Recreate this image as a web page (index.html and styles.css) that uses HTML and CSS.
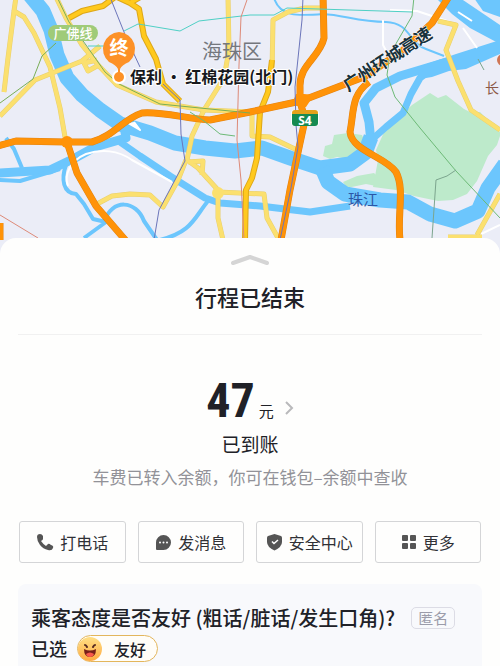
FILE: index.html
```html
<!DOCTYPE html>
<html lang="zh-CN">

<head>
    <meta charset="utf-8">
    <meta name="viewport" content="width=device-width, initial-scale=1.0">
    <title>行程已结束</title>
    <link rel="stylesheet" href="styles.css">
</head>

<body>
    <svg class="map" viewBox="0 0 500 260" preserveAspectRatio="xMidYMin slice" role="img" aria-label="地图">
        <!-- parks -->
        <g class="park">
            <path d="M385 130L412 105L424 97L430 93L438 98L446 95L464 109L470 112H480L501 133L497 145L488 156L477 181L467 194L453 200L438 201L414 196L396 190L373 187L378 160L376 150Z" />
            <path d="M323 156L325 146L332 144L334 135L348 133L362 135L366 145L357 155L349 159L337 157L330 159Z" />
            <path d="M343 182L357 176L374 173L378 177L376 186L366 184L347 188Z" />
        </g>

        <!-- rivers -->
        <g class="river">
            <path class="wide" d="M29 -6L43 11L51 30L57 55L67 78L82 95L100 110L120 124L150 133L175 143L205 148L235 151L262 148L290 158L320 168L350 164L365 153L371 137" />
            <path class="wide" d="M322 168L328 182L345 194L380 200L408 202L430 214L455 221L478 211L488 188L505 164" />
            <path class="medium" d="M-2 173L50 170L75 158L95 147L126 138L124 126" />
            <path class="middle" d="M120 142L140 156L170 176L205 198L220 203L260 206L310 212L350 206" />
            <path class="small" d="M6 138L14 149L22 168M-2 180L20 181L60 169" />
            <path class="small" d="M66 165C61 179 63 193 76 194L84 204L93 219L106 222L84 238" />
            <path class="small" d="M104 222C112 198 136 200 144 221L157 240" />
            <path class="small" d="M160 240C192 232 194 218 208 201" />
            <path class="medium" d="M505 47L474 56L440 64L400 76L376 88L364 103L369 122L371 142" />
            <path class="middle" d="M434 67L420 78L411 94L403 113L386 127L368 143" />
            <path class="fill" d="M436 -2H460L500 25V44L470 28L452 14Z" />
            <path class="fill" d="M474 -2H500V17L483 11Z" />
            <path class="fill" d="M424 65L456 54L500 40V54L466 69L449 71L432 77L420 79Z" />
            <path class="thin" d="M274 -2C280 17 297 16 323 14C344 15 358 22 386 22C411 23 408 43 426 49L444 56" />
        </g>
        <g class="gap">
            <path class="land" d="M128 123L140 130L134 122" />
            <path d="M68 186C63 174 72 160 86 154C101 149 118 150 132 160L172 182" />
            <path d="M383 20V45L390 58M390 10L417 11L450 22M458 12L472 21M463 28L477 48M479 235L500 225" />
        </g>

        <!-- light yellow streets -->
        <g class="street-edge">
            <path d="M16 -3L14 11L24 17L34 33L50 67L60 108L65 137M14 11L8 58L4 92M0 116L35 80L82 61L100 46M82 61L92 53M97 60L84 63L88 71L97 66" />
            <path d="M56 -3L66 18L82 45L99 66L117 85L156 102L204 110L252 112" />
            <path d="M228 -3L229 50L224 78L204 110L192 136L187 160L198 168L218 190V218L223 240M188 162L203 161L202 175M218 192L264 194L267 218L278 238" />
            <path d="M325 8H305L288 12L273 20L272 72M252 113L252 136L270 137L297 150M95 205L112 196L130 194L150 195L163 207L178 180L186 160" />
            <path d="M438 21L456 25L446 50L458 81L471 110L500 130M500 194L477 235M448 237H482" />
        </g>
        <g class="street">
            <path d="M16 -3L14 11L24 17L34 33L50 67L60 108L65 137M14 11L8 58L4 92M0 116L35 80L82 61L100 46M82 61L92 53M97 60L84 63L88 71L97 66" />
            <path d="M56 -3L66 18L82 45L99 66L117 85L156 102L204 110L252 112" />
            <path d="M228 -3L229 50L224 78L204 110L192 136L187 160L198 168L218 190V218L223 240M188 162L203 161L202 175M218 192L264 194L267 218L278 238" />
            <path d="M325 8H305L288 12L273 20L272 72M252 113L252 136L270 137L297 150M95 205L112 196L130 194L150 195L163 207L178 180L186 160" />
            <path d="M438 21L456 25L446 50L458 81L471 110L500 130M500 194L477 235M448 237H482" />
            <circle cx="218" cy="193" r="4" />
        </g>
        <g class="main-edge">
            <path d="M69 18L82 11L103 6L115 -3M117 -3L130 3L139 9L144 36L156 59L163 84L180 101M130 3L142 -4" />
            <path d="M272 60L268 92L260 112L257 158L252 178L246 190L245 240" />
        </g>
        <g class="main">
            <path d="M69 18L82 11L103 6L115 -3M117 -3L130 3L139 9L144 36L156 59L163 84L180 101M130 3L142 -4" />
            <path d="M272 60L268 92L260 112L257 158L252 178L246 190L245 240" />
        </g>

        <!-- expressways -->
        <g class="express-edge">
            <path d="M-2 146L16 141L65 142H92C114 136 123 119 142 113C161 111 188 119 210 120L250 112L301 101L364 77L402 51L432 23L450 -5" />
            <path d="M67 142L77 173L96 206L127 242M323 -5L324 38C320 57 299 65 300 87V101L305 120L300 143L290 190L281 240" />
            <path d="M369 82C351 95 354 112 350 132C352 151 386 157 396 172C405 189 397 215 400 240M0 223V240" />
        </g>
        <g class="express">
            <path d="M-2 146L16 141L65 142H92C114 136 123 119 142 113C161 111 188 119 210 120L250 112L301 101L364 77L402 51L432 23L450 -5" />
            <path d="M67 142L77 173L96 206L127 242M323 -5L324 38C320 57 299 65 300 87V101L305 120L300 143L290 190L281 240" />
            <path d="M369 82C351 95 354 112 350 132C352 151 386 157 396 172C405 189 397 215 400 240M0 223V240" />
        </g>
        <g class="junction">
            <circle cx="67" cy="142" r="6" />
            <path d="M296 94H304L315 95L310 101L306 107H300L292 104Z" />
        </g>

        <!-- metro lines -->
        <g class="metro">
            <path class="green" d="M0 103L33 79L42 56L56 43M57 -3L69 22L86 45L105 72L119 84L160 104L250 113" />
            <path class="teal" d="M88 46L104 46M124 31L138 24L180 31L199 21L250 15H274L287 8L413 12" />
            <path class="lime" d="M414 -3L412 16L390 54L387 75L395 97L420 128L456 171L500 218M190 112L204 121L220 134L235 136" />
            <path class="violet" d="M110 -3L126 37L140 67M163 84L180 100L181 134L185 161L159 210L154 240M303 -3L302 20L295 87L296 125L298 147L291 188L280 240" />
            <path class="coral" d="M248 -3L241 17L239 65L237 140L241 180L244 240M0 215L38 238" />
            <path class="grey" d="M432 238L436 180L447 176L456 170M478 59L484 70" />
        </g>

        <!-- labels -->
        <rect x="48" y="25" width="50" height="16" rx="8" fill="#9fcb79" />
        <text class="line-name" x="73" y="38">广佛线</text>
        <text class="district" x="202" y="59">海珠区</text>
        <text class="river-name" x="348" y="205">珠江</text>
        <text class="road-name" transform="translate(348 92) rotate(-33)">广州环城高速</text>
        <circle cx="503" cy="60" r="6" fill="#cf7655" />
        <text class="town" x="485" y="93">长</text>
        <rect x="291" y="110" width="28" height="16" rx="3" fill="#fff" />
        <path d="M292 115V113Q292 110 295 110H315Q318 110 318 113V115Z" fill="#e4a21b" />
        <path d="M292 114H318V123Q318 126 315 126H295Q292 126 292 123Z" fill="#158a51" />
        <text class="road-code" x="305" y="125">S4</text>

        <!-- destination pin -->
        <circle cx="119" cy="77" r="7" fill="#fff" />
        <circle cx="119" cy="77" r="5" fill="#fd9127" />
        <path d="M119 32A17 17 0 0 1 129 62Q122 65 120 69V77H118V69Q116 65 109 62A17 17 0 0 1 119 32Z" fill="#fd9127" />
        <text class="pin-text" x="119" y="55">终</text>
        <text class="place" x="130" y="83">保利 · 红棉花园(北门)</text>
    </svg>

    <main class="sheet">
        <button class="handle" type="button" aria-label="展开">
            <svg width="40" height="12" viewBox="0 0 40 12">
                <path d="M3 9L20 3L37 9" fill="none" stroke="#d5d5d5" stroke-width="4" stroke-linecap="round" stroke-linejoin="round" />
            </svg>
        </button>
        <h1 class="title">行程已结束</h1>

        <section class="fare">
            <a class="amount" href="#">
                <span class="number">47</span>
                <span class="unit">元</span>
                <svg class="arrow" width="10" height="16" viewBox="0 0 10 16">
                    <path d="M2 2L8 8L2 14" fill="none" stroke="#b9b9bb" stroke-width="2" />
                </svg>
            </a>
            <p class="status">已到账</p>
            <p class="note">车费已转入余额，你可在钱包–余额中查收</p>
        </section>

        <div class="actions">
            <button class="action" type="button">
                <svg width="18" height="18" viewBox="0 0 18 18">
                    <path d="M1 4Q1 1 4 1Q6 1 7 3L7 6Q7 7 5 8Q7 11 10 13L12 11Q13 10 15 12Q18 13 17 15Q16 18 12 17Q7 16 4 12Q1 8 1 4Z" fill="#555" />
                </svg>
                打电话
            </button>
            <button class="action" type="button">
                <svg width="17" height="17" viewBox="0 0 17 17">
                    <path d="M8.500 1A7.500 7.500 0 1 1 8.500 16H2Q1 16 1 15V8.500A7.500 7.500 0 0 1 8.500 1Z" fill="#555" />
                    <g fill="#fff">
                        <circle cx="5" cy="8.500" r="1" />
                        <circle cx="8.500" cy="8.500" r="1" />
                        <circle cx="12" cy="8.500" r="1" />
                    </g>
                </svg>
                发消息
            </button>
            <button class="action" type="button">
                <svg width="17" height="18" viewBox="0 0 17 18">
                    <path d="M8.500 1L15 3Q16 3.500 16 4.500V9Q16 14 8.500 17.500Q1 14 1 9V4.500Q1 3.500 2 3Z" fill="#555" />
                    <path d="M6 8.500L8 10.500L12 7" fill="none" stroke="#fff" stroke-width="1.500" />
                </svg>
                安全中心
            </button>
            <button class="action" type="button">
                <svg width="16" height="16" viewBox="0 0 16 16" fill="#555">
                    <rect x="1" y="1" width="6" height="6" rx="1" />
                    <rect x="9" y="1" width="6" height="6" rx="1" />
                    <rect x="1" y="9" width="6" height="6" rx="1" />
                    <rect x="9" y="9" width="6" height="6" rx="1" />
                </svg>
                更多
            </button>
        </div>

        <section class="survey">
            <div class="question">
                <h2>乘客态度是否友好 (粗话/脏话/发生口角)?</h2>
                <span class="anonymous">匿名</span>
            </div>
            <div class="answer">
                <span>已选</span>
                <button class="choice" type="button">
                    <svg width="24" height="24" viewBox="0 0 24 24">
                        <defs>
                            <linearGradient id="face" x1="0" y1="0" x2="0" y2="1">
                                <stop offset="0" stop-color="#ffdf84" />
                                <stop offset="1" stop-color="#ffaa42" />
                            </linearGradient>
                        </defs>
                        <circle cx="12" cy="12" r="12" fill="url(#face)" />
                        <path d="M7 8Q8 8 9 10M17 8Q16 8 15 10" fill="none" stroke="#572a20" stroke-width="2" stroke-linecap="round" />
                        <path d="M6 12Q12 15 18 12Q18 20 12 20Q6 20 6 12Z" fill="#782019" />
                        <path d="M8 17Q12 14 16 17Q15 20 12 20Q9 20 8 17Z" fill="#fa594b" />
                    </svg>
                    友好
                </button>
            </div>
        </section>
    </main>
</body>

</html>
```
FILE: styles.css
```css
* {
    box-sizing: border-box;
}

body {
    display: flex;
    flex-direction: column;
    min-height: 100vh;
    margin: 0;
    background-color: #fefefd;
    color: #202127;
    font-family: "Noto Sans CJK SC", sans-serif;
}

h1,
h2,
p {
    margin: 0;
    font-weight: 500;
}

button {
    padding: 0;
    border: none;
    background: none;
    color: inherit;
    font-family: inherit;
    cursor: pointer;
}

/* map */
.map {
    display: block;
    flex: none;
    width: 100%;
    height: 260px;
    background-color: #ebedf7;
}

.map path {
    stroke-linejoin: round;
}

.park {
    fill: #bdeacb;
}

.river {
    fill: none;
    stroke: #6cc6fd;
}

.river .fill {
    fill: #6cc6fd;
    stroke: none;
}

.thin {
    stroke-width: 2px;
}

.small {
    stroke-width: 4px;
}

.middle {
    stroke-width: 7px;
}

.medium {
    stroke-width: 9px;
}

.wide {
    stroke-width: 15px;
}

.gap {
    fill: none;
    stroke: #fff;
    stroke-width: 2px;
}

.gap .land {
    fill: #fff;
}

.street-edge,
.street,
.main-edge,
.main,
.express-edge,
.express {
    fill: none;
}

.street-edge {
    stroke: #e8cf70;
    stroke-width: 5px;
}

.street {
    stroke: #fbe06f;
    stroke-width: 4px;
}

.main-edge {
    stroke: #dda719;
    stroke-width: 6px;
}

.main {
    stroke: #ffc91d;
    stroke-width: 4px;
}

.express-edge {
    stroke: #e28313;
    stroke-width: 7px;
}

.express {
    stroke: #ff9308;
    stroke-width: 6px;
}

.junction {
    fill: #ff9308;
}

.metro {
    fill: none;
    stroke-width: 1px;
}

.green {
    stroke: #79ae57;
}

.teal {
    stroke: #4fd0c5;
}

.lime {
    stroke: #6dba77;
}

.violet {
    stroke: #6b75ba;
}

.coral {
    stroke: #dd8a78;
}

.grey {
    stroke: #7ca58e;
}

.line-name {
    fill: #fff;
    font-size: 13px;
    font-weight: 500;
    text-anchor: middle;
}

.district {
    fill: #74777d;
    font-size: 20px;
}

.river-name {
    fill: #2c56a5;
    font-size: 15px;
}

.road-name {
    fill: #17323c;
    stroke: #fff;
    stroke-width: 1px;
    paint-order: stroke;
    font-size: 17px;
    font-weight: 700;
}

.town {
    fill: #8b5947;
    font-size: 14px;
}

.road-code {
    fill: #fff;
    font-family: "Noto Sans", sans-serif;
    font-size: 12px;
    font-weight: 700;
    text-anchor: middle;
}

.pin-text {
    fill: #fff;
    font-size: 19px;
    font-weight: 700;
    text-anchor: middle;
}

.place {
    fill: #17191d;
    stroke: #fff;
    stroke-width: 2px;
    paint-order: stroke;
    font-size: 16px;
    font-weight: 700;
}

/* bottom sheet */
.sheet {
    display: flex;
    flex: 1;
    flex-direction: column;
    z-index: 1;
    margin-top: -22px;
    padding: 16px 18px 0;
    border-radius: 16px 16px 0 0;
    background-color: #fefefd;
}

.handle {
    align-self: center;
    height: 12px;
}

.handle svg {
    display: block;
}

.title {
    padding: 14px 0 22px;
    border-bottom: 1px solid #f1f1f1;
    font-size: 22px;
    line-height: 32px;
    text-align: center;
}

.fare {
    padding: 40px 0 32px;
    text-align: center;
}

.amount {
    display: flex;
    align-items: baseline;
    justify-content: center;
    gap: 4px;
    color: inherit;
    text-decoration: none;
}

.number {
    font-family: "Roboto Condensed", Roboto, sans-serif;
    font-size: 48px;
    font-weight: 700;
    line-height: 51px;
}

.unit {
    font-size: 15px;
    line-height: 20px;
}

.arrow {
    align-self: flex-end;
    margin: 0 0 10px 6px;
}

.status {
    margin-top: 4px;
    font-size: 19px;
    font-weight: 400;
    line-height: 28px;
}

.note {
    margin-top: 7px;
    color: #929298;
    font-size: 17px;
    font-weight: 400;
    line-height: 24px;
}

.actions {
    display: grid;
    grid-template-columns: repeat(4, 1fr);
    gap: 12px;
    padding: 0 1px;
}

.action {
    display: flex;
    align-items: center;
    justify-content: center;
    gap: 6px;
    height: 42px;
    border: 1px solid #d4d5d7;
    border-radius: 3px;
    color: #303136;
    font-size: 16px;
    white-space: nowrap;
}

/* survey card */
.survey {
    flex: 1;
    margin-top: 21px;
    padding: 20px 13px 2px;
    border-radius: 8px 8px 0 0;
    background-color: #f8f9fc;
}

.question {
    display: flex;
    align-items: center;
    gap: 16px;
}

.question h2 {
    font-size: 20px;
    line-height: 28px;
}

.anonymous {
    flex: none;
    padding: 0 6px;
    border: 1px solid #dcdce5;
    border-radius: 5px;
    color: #9b9caa;
    font-size: 15px;
    line-height: 20px;
}

.answer {
    display: flex;
    align-items: center;
    gap: 10px;
    margin-top: 3px;
    font-size: 18px;
    font-weight: 500;
    line-height: 27px;
}

.choice {
    display: flex;
    align-items: center;
    gap: 12px;
    height: 27px;
    padding: 0 11px 0 0;
    border: 1px solid #e3b65c;
    border-radius: 14px;
    background-color: #fffdf8;
    font-size: 16px;
    font-weight: 500;
}
```
